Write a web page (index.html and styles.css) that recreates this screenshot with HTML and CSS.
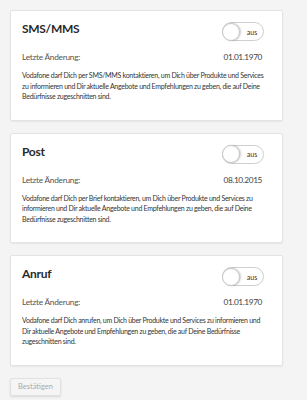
FILE: index.html
```html
<!DOCTYPE html>
<html lang="de">
<head>
  <meta charset="UTF-8" />
  <meta name="viewport" content="width=device-width, initial-scale=1.0"/>
  <title>Einwilligungen</title>
  <link rel="stylesheet" href="styles.css">
</head>
<body>
  <div class="container">
    <div class="card">
      <div class="card-head">
        <h2>SMS/MMS</h2>
        <div class="toggle"><span class="knob"></span><span class="label">aus</span></div>
      </div>
      <div class="changed">
        <span>Letzte Änderung:</span>
        <span class="date">01.01.1970</span>
      </div>
      <p class="text">Vodafone darf Dich per SMS/MMS kontaktieren, um Dich über Produkte und Services zu informieren und Dir aktuelle Angebote und Empfehlungen zu geben, die auf Deine Bedürfnisse zugeschnitten sind.</p>
    </div>

    <div class="card">
      <div class="card-head">
        <h2>Post</h2>
        <div class="toggle"><span class="knob"></span><span class="label">aus</span></div>
      </div>
      <div class="changed">
        <span>Letzte Änderung:</span>
        <span class="date">08.10.2015</span>
      </div>
      <p class="text">Vodafone darf Dich per Brief kontaktieren, um Dich über Produkte und Services zu informieren und Dir aktuelle Angebote und Empfehlungen zu geben, die auf Deine Bedürfnisse zugeschnitten sind.</p>
    </div>

    <div class="card">
      <div class="card-head">
        <h2>Anruf</h2>
        <div class="toggle"><span class="knob"></span><span class="label">aus</span></div>
      </div>
      <div class="changed">
        <span>Letzte Änderung:</span>
        <span class="date">01.01.1970</span>
      </div>
      <p class="text">Vodafone darf Dich anrufen, um Dich über Produkte und Services zu informieren und Dir aktuelle Angebote und Empfehlungen zu geben, die auf Deine Bedürfnisse zugeschnitten sind.</p>
    </div>

    <button class="confirm-btn" disabled>Bestätigen</button>
  </div>
</body>
</html>
```

FILE: styles.css
```css
* {
  box-sizing: border-box;
  margin: 0;
  padding: 0;
}

body {
  font-family: Lato, sans-serif;
  background: #f4f4f4;
  color: #333;
}

.container {
  padding: 10px 24px 10px 10px;
  display: flex;
  flex-direction: column;
  gap: 12px;
}

.card {
  background: #fff;
  border: 1px solid #e3e3e3;
  border-radius: 2px;
  box-shadow: 0 1px 2px rgba(0, 0, 0, 0.06);
  padding: 11px 16px 18px 11px;
}

.card-head {
  display: flex;
  justify-content: space-between;
  align-items: flex-start;
  height: 19px;
}

.card-head h2 {
  font-size: 12px;
  font-weight: 700;
  line-height: 16px;
  letter-spacing: -0.3px;
  margin-top: -1px;
  color: #2a2a2a;
}

.toggle {
  width: 42px;
  height: 19px;
  border: 1px solid #cfcfcf;
  border-radius: 10px;
  display: flex;
  align-items: center;
  margin-right: 2px;
  background: #fff;
}

.knob {
  width: 18px;
  height: 18px;
  border-radius: 50%;
  background: #fff;
  border: 1px solid #c8c8c8;
  box-shadow: 1px 0 2px rgba(0, 0, 0, 0.2);
  margin-left: -1px;
}

.toggle .label {
  flex: 1;
  text-align: center;
  font-size: 7px;
  color: #333;
  padding-left: 1px;
}

.changed {
  display: flex;
  justify-content: space-between;
  margin-top: 10px;
  font-size: 8.3px;
  line-height: 12px;
  letter-spacing: -0.25px;
  color: #555;
  padding-right: 4px;
}

.changed .date {
  letter-spacing: -0.4px;
  color: #444;
}

.text {
  margin-top: 7px;
  font-size: 7px;
  line-height: 10.5px;
  letter-spacing: -0.27px;
  color: #333;
}

.confirm-btn {
  align-self: flex-start;
  width: 51px;
  height: 18px;
  font-family: Lato, sans-serif;
  font-size: 7.5px;
  color: #aaa;
  background: #f5f5f5;
  border: 1px solid #e2e2e2;
  border-radius: 2px;
  box-shadow: 0 1px 2px rgba(0, 0, 0, 0.12);
}
```
